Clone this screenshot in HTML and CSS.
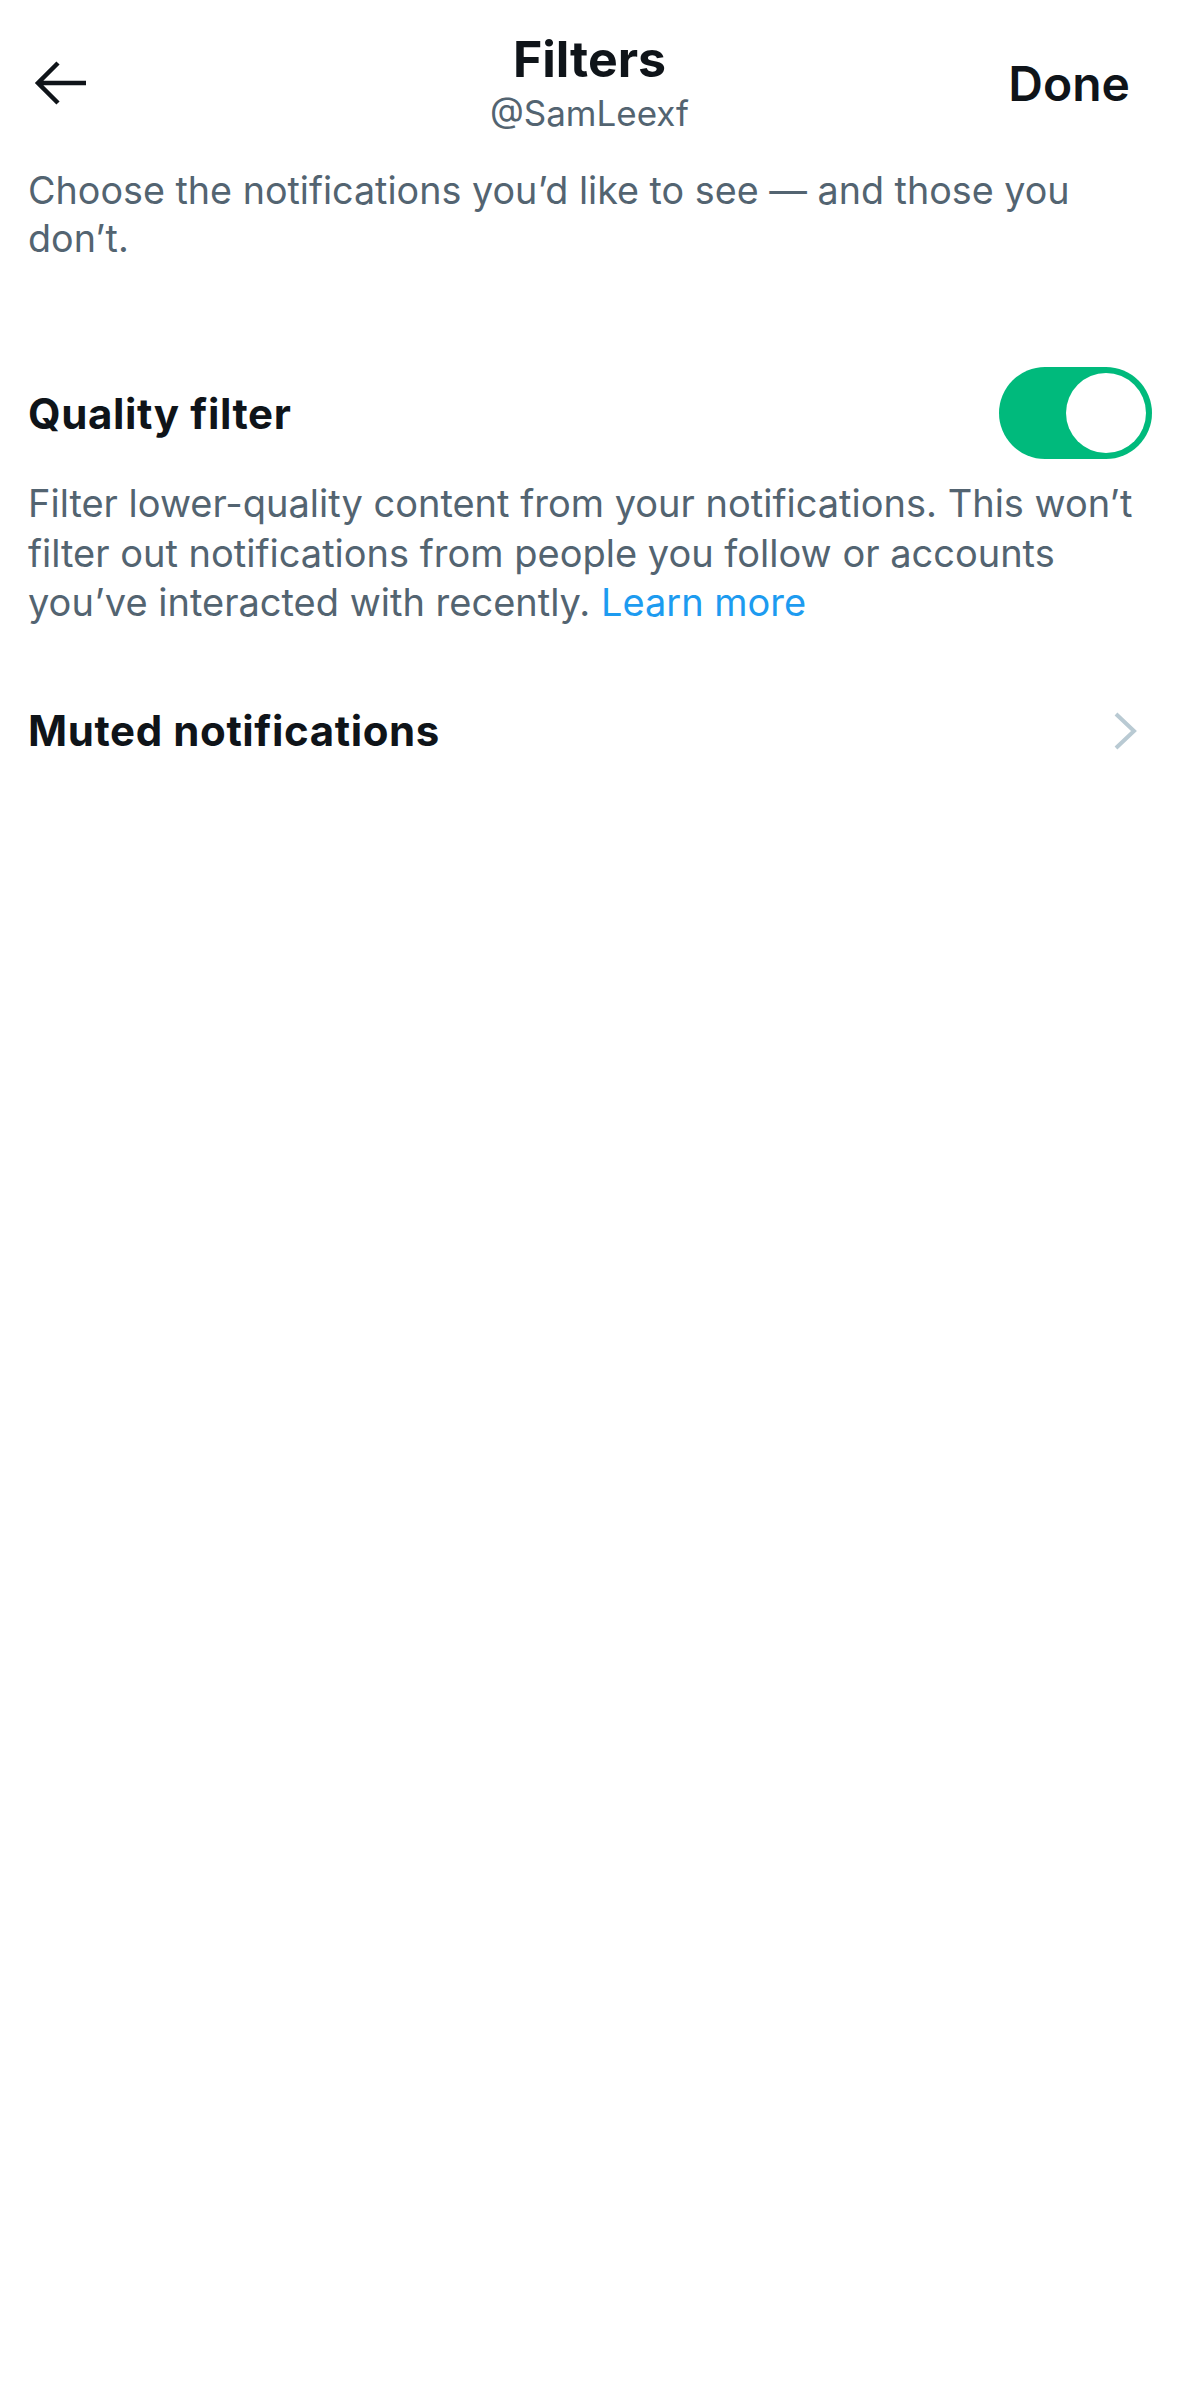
FILE: index.html
```html
<!DOCTYPE html>
<html>
<head>
    <title>Filters</title>
    <link rel="stylesheet" href="styles.css">
</head>
<body>
    <div class="header">
        <span class="back">
            <svg width="54" height="46" viewBox="0 0 54 46">
                <path d="M52 23H4M24 3L4 23l20 20" fill="none" stroke="#0f1419" stroke-width="4.5"/>
            </svg>
        </span>
        <div class="title">
            <div class="title-main">Filters</div>
            <div class="title-sub">@SamLeexf</div>
        </div>
        <span class="done">Done</span>
    </div>

    <p class="intro">Choose the notifications you’d like to see — and those you don’t.</p>

    <div class="setting-row">
        <span class="setting-name">Quality filter</span>
        <span class="toggle"><span class="knob"></span></span>
    </div>
    <p class="setting-desc">Filter lower-quality content from your notifications. This won’t filter out notifications from people you follow or accounts you’ve interacted with recently. <a href="#">Learn more</a></p>

    <div class="link-row">
        <span class="setting-name">Muted notifications</span>
        <svg class="chevron" width="26" height="38" viewBox="0 0 26 38">
            <path d="M3 2l18 17L3 36" fill="none" stroke="#b9cad3" stroke-width="4"/>
        </svg>
    </div>
</body>
</html>
```

FILE: styles.css
```css
body {
    font-family: Inter, "Noto Sans", sans-serif;
    background-color: #fff;
    color: #0f1419;
    margin: 0;
    padding: 0;
}

.header {
    display: grid;
    grid-template-columns: 1fr auto 1fr;
    align-items: center;
    height: 166px;
    padding: 0 34px;
}

.back {
    display: flex;
}

.title {
    text-align: center;
}

.title-main {
    font-size: 50px;
    line-height: 56px;
    font-weight: 700;
}

.title-sub {
    font-size: 35px;
    line-height: 44px;
    margin-top: 4px;
    color: #536471;
}

.done {
    justify-self: end;
    margin-right: 15px;
    font-size: 48px;
    font-weight: 600;
}

.intro {
    margin: 0;
    padding: 0 28px;
    font-size: 37.7px;
    line-height: 48px;
    color: #536471;
}

.setting-row {
    display: flex;
    align-items: center;
    justify-content: space-between;
    margin-top: 105px;
    padding: 0 27px 0 28px;
}

.setting-name {
    font-size: 42px;
    font-weight: 700;
    letter-spacing: 0.6px;
}

.toggle {
    display: flex;
    align-items: center;
    justify-content: flex-end;
    width: 153px;
    height: 92px;
    padding: 0 6px;
    box-sizing: border-box;
    border-radius: 46px;
    background-color: #00ba7c;
}

.knob {
    width: 80px;
    height: 80px;
    border-radius: 50%;
    background-color: #fff;
}

.setting-desc {
    margin: 20px 0 0;
    padding: 0 28px;
    font-size: 38px;
    line-height: 49.5px;
    color: #536471;
}

.setting-desc a {
    color: #1d9bf0;
    text-decoration: none;
}

.link-row {
    display: flex;
    align-items: center;
    justify-content: space-between;
    height: 110px;
    margin-top: 48px;
    padding: 0 40px 0 28px;
}
```
